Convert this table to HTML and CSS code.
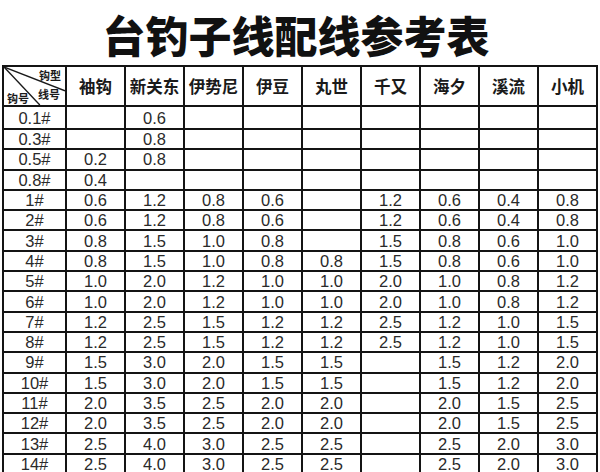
FILE: index.html
```html
<!DOCTYPE html>
<html lang="zh">
<head>
<meta charset="utf-8">
<title>台钓子线配线参考表</title>
<link rel="stylesheet" href="styles.css">
</head>
<body>
<div class="page">
  <h1 class="title">台钓子线配线参考表</h1>
  <table class="chart">
    <thead>
      <tr class="head-row">
        <th class="corner">
          <svg class="corner-lines" viewBox="0 0 63 40" preserveAspectRatio="none">
            <line x1="0" y1="0" x2="63" y2="25" />
            <line x1="0" y1="0" x2="37" y2="40" />
          </svg>
          <span class="lbl lbl-type">钩型</span>
          <span class="lbl lbl-line">线号</span>
          <span class="lbl lbl-hook">钩号</span>
        </th>
        <th>袖钩</th><th>新关东</th><th>伊势尼</th><th>伊豆</th><th>丸世</th><th>千又</th><th>海夕</th><th>溪流</th><th>小机</th>
      </tr>
    </thead>
    <tbody>
      <tr class="first"><td>0.1#</td><td></td><td>0.6</td><td></td><td></td><td></td><td></td><td></td><td></td><td></td></tr>
      <tr><td>0.3#</td><td></td><td>0.8</td><td></td><td></td><td></td><td></td><td></td><td></td><td></td></tr>
      <tr><td>0.5#</td><td>0.2</td><td>0.8</td><td></td><td></td><td></td><td></td><td></td><td></td><td></td></tr>
      <tr><td>0.8#</td><td>0.4</td><td></td><td></td><td></td><td></td><td></td><td></td><td></td><td></td></tr>
      <tr><td>1#</td><td>0.6</td><td>1.2</td><td>0.8</td><td>0.6</td><td></td><td>1.2</td><td>0.6</td><td>0.4</td><td>0.8</td></tr>
      <tr><td>2#</td><td>0.6</td><td>1.2</td><td>0.8</td><td>0.6</td><td></td><td>1.2</td><td>0.6</td><td>0.4</td><td>0.8</td></tr>
      <tr><td>3#</td><td>0.8</td><td>1.5</td><td>1.0</td><td>0.8</td><td></td><td>1.5</td><td>0.8</td><td>0.6</td><td>1.0</td></tr>
      <tr><td>4#</td><td>0.8</td><td>1.5</td><td>1.0</td><td>0.8</td><td>0.8</td><td>1.5</td><td>0.8</td><td>0.6</td><td>1.0</td></tr>
      <tr><td>5#</td><td>1.0</td><td>2.0</td><td>1.2</td><td>1.0</td><td>1.0</td><td>2.0</td><td>1.0</td><td>0.8</td><td>1.2</td></tr>
      <tr><td>6#</td><td>1.0</td><td>2.0</td><td>1.2</td><td>1.0</td><td>1.0</td><td>2.0</td><td>1.0</td><td>0.8</td><td>1.2</td></tr>
      <tr><td>7#</td><td>1.2</td><td>2.5</td><td>1.5</td><td>1.2</td><td>1.2</td><td>2.5</td><td>1.2</td><td>1.0</td><td>1.5</td></tr>
      <tr><td>8#</td><td>1.2</td><td>2.5</td><td>1.5</td><td>1.2</td><td>1.2</td><td>2.5</td><td>1.2</td><td>1.0</td><td>1.5</td></tr>
      <tr><td>9#</td><td>1.5</td><td>3.0</td><td>2.0</td><td>1.5</td><td>1.5</td><td></td><td>1.5</td><td>1.2</td><td>2.0</td></tr>
      <tr><td>10#</td><td>1.5</td><td>3.0</td><td>2.0</td><td>1.5</td><td>1.5</td><td></td><td>1.5</td><td>1.2</td><td>2.0</td></tr>
      <tr><td>11#</td><td>2.0</td><td>3.5</td><td>2.5</td><td>2.0</td><td>2.0</td><td></td><td>2.0</td><td>1.5</td><td>2.5</td></tr>
      <tr><td>12#</td><td>2.0</td><td>3.5</td><td>2.5</td><td>2.0</td><td>2.0</td><td></td><td>2.0</td><td>1.5</td><td>2.5</td></tr>
      <tr><td>13#</td><td>2.5</td><td>4.0</td><td>3.0</td><td>2.5</td><td>2.5</td><td></td><td>2.5</td><td>2.0</td><td>3.0</td></tr>
      <tr><td>14#</td><td>2.5</td><td>4.0</td><td>3.0</td><td>2.5</td><td>2.5</td><td></td><td>2.5</td><td>2.0</td><td>3.0</td></tr>
    </tbody>
  </table>
</div>
</body>
</html>
```

FILE: styles.css
```css
html, body {
  margin: 0;
  padding: 0;
  background: #ffffff;
}

.page {
  width: 600px;
  height: 472px;
  overflow: hidden;
  padding-top: 13px;
  box-sizing: border-box;
}

.title {
  margin: 0 0 9px 0;
  padding-right: 8px;
  text-align: center;
  font-family: "Noto Sans CJK SC", sans-serif;
  font-weight: 900;
  font-size: 43px;
  line-height: 43px;
  letter-spacing: 0;
  color: #111111;
}

.chart {
  margin-left: 2px;
  width: 596px;
  table-layout: fixed;
  border-collapse: collapse;
  color: #2a2a2a;
}

.chart th,
.chart td {
  border: 2px solid #141414;
  padding: 0;
  text-align: center;
  vertical-align: middle;
}

.chart th {
  font-family: "Noto Sans CJK SC", sans-serif;
  font-weight: 700;
  font-size: 16.5px;
  color: #1a1a1a;
}

.chart th:first-child {
  width: 61px;
}

.head-row {
  height: 40px;
}

.chart td {
  font-family: "Liberation Sans", Arial, sans-serif;
  font-size: 16.5px;
  line-height: 16px;
  height: 18.3px;
}

.chart tr.first td {
  height: 21px;
}

.corner {
  position: relative;
  overflow: hidden;
}

.corner-lines {
  position: absolute;
  left: 0;
  top: 0;
  width: 100%;
  height: 100%;
}

.corner-lines line {
  stroke: #1a1a1a;
  stroke-width: 1.4;
  vector-effect: non-scaling-stroke;
}

.lbl {
  position: absolute;
  font-size: 11px;
  line-height: 11px;
  font-weight: 700;
  color: #1a1a1a;
}

.lbl-type {
  right: 4px;
  top: 3px;
}

.lbl-line {
  left: 34px;
  top: 22px;
}

.lbl-hook {
  left: 3px;
  bottom: 1px;
}
```
